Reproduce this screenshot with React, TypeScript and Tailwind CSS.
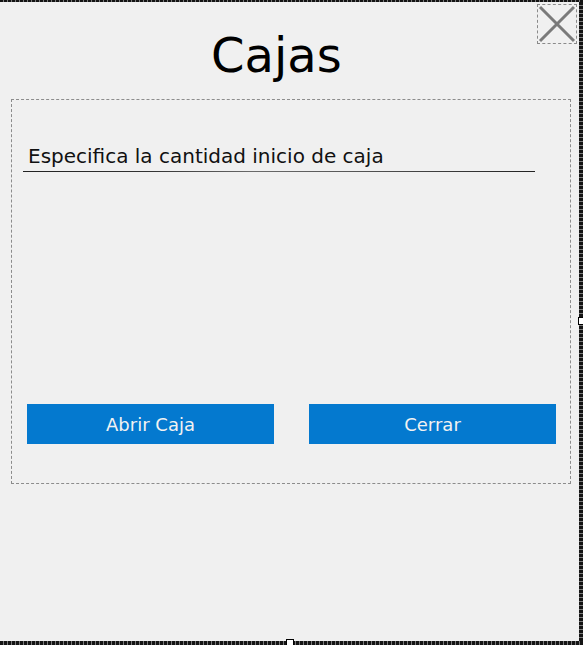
const frameX = "bg-[repeating-linear-gradient(90deg,#141414_0_3px,#7a7a7a_3px_4px)]";
const frameY = "bg-[repeating-linear-gradient(180deg,#141414_0_3px,#7a7a7a_3px_4px)]";

export default function App() {
  return (
    <div className="relative flex h-[645px] w-[583px] flex-col overflow-hidden bg-[#f0f0f0] font-['DejaVu_Sans',sans-serif]">
      {/* marco de redimension del diseñador */}
      <div className={`h-[2px] w-full ${frameX}`} />
      <div className="flex flex-1">
        <div className="flex flex-1 flex-col">
          {/* encabezado */}
          <div className="flex h-[97px] items-start">
            <h1 className="ml-[211px] mt-[29px] text-[48px] leading-none text-black">Cajas</h1>
            <button className="ml-auto mr-[2px] mt-[2px] h-[40px] w-[40px] border border-dashed border-[#8a8a8a]">
              <svg width="38" height="38" viewBox="0 0 38 38">
                <path d="M2 2 L36 36 M36 2 L2 36" stroke="#7a7a7a" strokeWidth="3" />
              </svg>
            </button>
          </div>

          {/* grupo */}
          <div className="ml-[11px] flex h-[385px] w-[560px] flex-col border border-dashed border-[#8c8c8c]">
            <p className="ml-[16px] mt-[46px] text-[20px] leading-none text-[#111]">
              Especifica la cantidad inicio de caja
            </p>
            <div className="ml-[11px] mt-[5px] h-px w-[512px] bg-[linear-gradient(90deg,#222,#333_25%,#6a6a6a_45%,#555_65%,#222)]" />
            <div className="ml-[15px] mt-[232px] flex gap-[35px]">
              <button className="flex h-[40px] w-[247px] items-center justify-center bg-[#0479cf] pt-[2px] text-[18px] leading-none text-[#f2f2f2]">
                Abrir Caja
              </button>
              <button className="flex h-[40px] w-[247px] items-center justify-center bg-[#0479cf] pt-[2px] text-[18px] leading-none text-[#f2f2f2]">
                Cerrar
              </button>
            </div>
          </div>
        </div>
        <div className={`w-[4px] ${frameY}`} />
      </div>
      <div className={`h-[4px] w-full ${frameX}`} />

      {/* asas */}
      <div className="absolute left-[578px] top-[317px] h-[8px] w-[7px] border border-black bg-white" />
      <div className="absolute left-[286px] top-[639px] h-[7px] w-[8px] border border-black bg-white" />
    </div>
  );
}
